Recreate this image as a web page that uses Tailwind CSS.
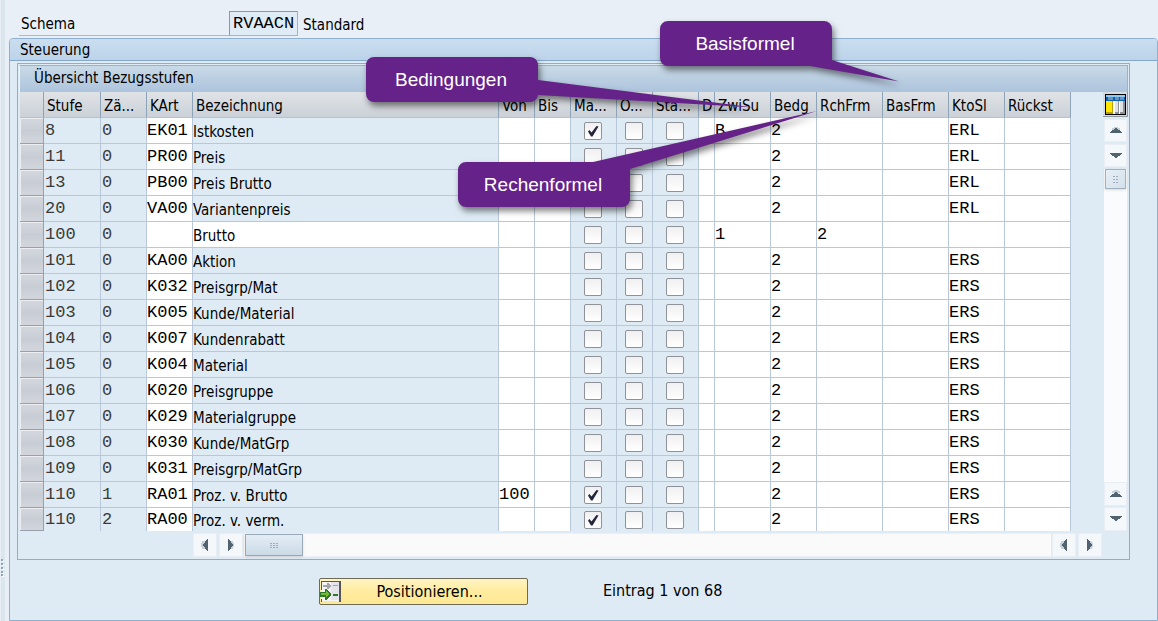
<!DOCTYPE html>
<html lang="de">
<head>
<meta charset="utf-8">
<title>Schema Steuerung</title>
<script src="https://cdn.jsdelivr.net/npm/@tailwindcss/browser@4"></script>
</head>
<body class="relative flex min-h-screen bg-[#e8eff7] font-['DejaVu_Sans_Condensed','DejaVu_Sans',sans-serif] text-[15px] leading-5 text-black">
<!-- splitter -->
<div class="ml-px flex w-1 shrink-0 items-end bg-[#dae6eb]">
  <svg class="mb-11" width="3" height="18" viewBox="0 0 3 18" shape-rendering="crispEdges"><path fill="#fff" d="M1 1h2v2H1zM1 5h2v2H1zM1 9h2v2H1zM1 13h2v2H1zM1 16h2v2H1z"/><path fill="#93a3b5" d="M0 0h2v2H0zM0 4h2v2H0zM0 8h2v2H0zM0 12h2v2H0zM0 15h2v2H0z"/></svg>
</div>

<main class="ml-1 min-w-0 flex-1">
  <!-- schema line -->
  <div class="flex h-[38px] items-start pt-[11px] pl-[10px]">
    <label for="schema" class="flex h-[25px] w-[210px] items-center border-b border-[#b4b8bb] pt-0.5 pl-0.5">Schema</label>
    <input id="schema" value="RVAACN" readonly class="h-[25px] w-[69px] border border-[#a9b3bc] border-t-[#8f989f] border-l-[#8f989f] bg-[#dfebf5] pl-[3px] font-['Liberation_Mono',monospace] text-[17px] leading-5 outline-none">
    <span class="flex h-[25px] items-center pt-0.5 pl-[5px]">Standard</span>
  </div>

  <!-- group box -->
  <section class="rounded-t-[4px] border border-[#8eb0d0] bg-[#deebf4]">
    <h2 class="flex h-[22px] items-center rounded-t-[3px] border-b border-[#85a7c9] bg-linear-to-b from-[#cbdef0] to-[#bcd3e9] pl-[10px]">Steuerung</h2>

    <div class="mt-0.5 mr-[27px] ml-[7px] border border-[#8fadcc] pb-0.5">
      <div class="mx-px mt-px flex h-[27px] items-center border-t border-r border-l border-[#9fb0c2] border-l-[#eef4f9] bg-linear-to-b from-[#c9dae7] to-[#adc4dd] pb-0.5 pl-[14px]">Übersicht Bezugsstufen</div>
      <div class="flex pl-0.5">
        <table class="flex-1 table-fixed border-separate border-spacing-0">
          <colgroup>
            <col class="w-6"><col class="w-[57px]"><col class="w-[46px]"><col class="w-[46px]"><col><col class="w-9"><col class="w-9"><col class="w-[46px]"><col class="w-9"><col class="w-[46px]"><col class="w-4"><col class="w-14"><col class="w-[46px]"><col class="w-[66px]"><col class="w-[66px]"><col class="w-14"><col class="w-[66px]">
          </colgroup>
          <thead><tr id="head"></tr></thead>
          <tbody id="rows"></tbody>
        </table>
        <!-- vertical scrollbar -->
        <div class="ml-8 flex w-[25px] shrink-0 flex-col items-center">
          <button aria-label="Tabelleneinstellungen" class="flex h-[25px] w-[25px] items-center justify-center border-r border-b border-[#8f989f] bg-[#d5dbe0]">
            <svg width="21" height="21" viewBox="0 0 21 21" shape-rendering="crispEdges"><path d="M0 0h21v21H0z"/><path fill="#8ccaf7" d="M1 1h19v2H1z"/><path fill="#0d62b0" d="M1 3h19v4H1z"/><path fill="#6f94bb" d="M3 3h5v3H3zM10 3h4v3h-4zM15 3h4v3h-4z"/><path fill="#fff" d="M1 7h19v13H1z"/><path fill="#ffe600" d="M1 7h6v11H1z"/><path fill="#b7a000" d="M1 18h6v2H1zM7 7h1v13H7z"/><path fill="#dfe3e6" d="M10 7h3v11h-3zM15 7h3v11h-3z"/><path fill="#8c9297" d="M10 18h4v2h-4zM15 18h4v2h-4zM13 7h1v11h-1zM18 7h2v13h-2z"/></svg>
          </button>
          <button aria-label="Zeile zurück" class="mt-0.5 grid h-[23px] w-[23px] shrink-0 place-items-center border border-[#e9eef5] bg-[#f4f8fb]"><svg width="12" height="8" viewBox="0 0 12 8" shape-rendering="crispEdges"><path fill="#c7d0d8" d="M4 0h4v1h2v2H2V1h2z"/><path fill="#50636f" d="M0 5h12v1H0zM1 4h10v1H1zM2 3h8v1H2zM4 2h4v1H4zM5 1h2v1H5z"/></svg></button>
          <button aria-label="Zeile vor" class="mt-0.5 grid h-[23px] w-[23px] shrink-0 place-items-center border border-[#e9eef5] bg-[#f4f8fb]"><svg width="12" height="8" viewBox="0 0 12 8" shape-rendering="crispEdges"><path fill="#50636f" d="M0 1h12v1H0zM1 2h10v1H1zM2 3h8v1H2zM4 4h4v1H4zM5 5h2v1H5z"/></svg></button>
          <div class="mt-0.5 flex w-[23px] flex-1 flex-col bg-[#fafbfc]">
            <div class="ml-px grid h-5 w-[21px] place-items-center border border-[#a3b1be] bg-linear-to-br from-[#e6eff6] to-[#d3e0eb] shadow-sm"><svg width="7" height="9" viewBox="0 0 7 9" shape-rendering="crispEdges"><path fill="#a0aebb" d="M1 1h2v1H1zM4 1h2v1H4zM1 4h2v1H1zM4 4h2v1H4zM1 7h2v1H1zM4 7h2v1H4z"/></svg></div>
          </div>
          <button aria-label="Seite zurück" class="grid h-6 w-[23px] shrink-0 place-items-center border border-[#e9eef5] bg-[#f4f8fb]"><svg width="12" height="8" viewBox="0 0 12 8" shape-rendering="crispEdges"><path fill="#c7d0d8" d="M4 0h4v1h2v2H2V1h2z"/><path fill="#50636f" d="M0 6h12v1H0zM1 5h10v1H1zM2 4h8v1H2zM4 3h4v1H4zM5 2h2v1H5z"/></svg></button>
          <button aria-label="Seite vor" class="mt-px grid h-6 w-[23px] shrink-0 place-items-center border border-[#e9eef5] bg-[#f4f8fb]"><svg width="12" height="8" viewBox="0 0 12 8" shape-rendering="crispEdges"><path fill="#50636f" d="M0 1h12v1H0zM1 2h10v1H1zM2 3h8v1H2zM4 4h4v1H4zM5 5h2v1H5z"/></svg></button>
        </div>
        <div class="w-px shrink-0"></div>
      </div>
      <!-- horizontal scrollbar -->
      <div class="mt-0.5 mr-[27px] ml-[175px] flex h-6 gap-px">
        <button aria-label="Spalte zurück" class="mr-px grid h-6 w-6 place-items-center border border-[#e9eef5] bg-[#f4f8fb]"><svg width="8" height="12" viewBox="0 0 8 12" shape-rendering="crispEdges"><path fill="#c7d0d8" d="M0 4h1V2h3v8H1V8H0z"/><path fill="#50636f" d="M6 0h1v12H6zM5 1h1v10H5zM4 2h1v8H4zM3 4h1v4H3zM2 5h1v2H2z"/></svg></button>
        <button aria-label="Spalte vor" class="grid h-6 w-6 place-items-center border border-[#e9eef5] bg-[#f4f8fb]"><svg width="8" height="12" viewBox="0 0 8 12" shape-rendering="crispEdges"><path fill="#c7d0d8" d="M3 2h3v2h1v4H6v2H3z"/><path fill="#50636f" d="M1 0h1v12H1zM2 1h1v10H2zM3 2h1v8H3zM4 4h1v4H4zM5 5h1v2H5z"/></svg></button>
        <div class="flex flex-1 border-y border-[#eceff3] bg-[#fafafa]">
          <div class="ml-px grid h-[22px] w-[58px] place-items-center border border-[#98a8b7] bg-linear-to-b from-[#e3edf5] to-[#cbdae7] shadow-sm"><svg width="9" height="7" viewBox="0 0 9 7" shape-rendering="crispEdges"><path fill="#a0aebb" d="M0 1h2v1H0zM3 1h2v1H3zM6 1h2v1H6zM0 3h2v1H0zM3 3h2v1H3zM6 3h2v1H6zM0 5h2v1H0zM3 5h2v1H3zM6 5h2v1H6z"/></svg></div>
        </div>
        <button aria-label="Seite links" class="mr-px grid h-6 w-6 place-items-center border border-[#e9eef5] bg-[#f4f8fb]"><svg width="8" height="12" viewBox="0 0 8 12" shape-rendering="crispEdges"><path fill="#c7d0d8" d="M0 4h1V2h3v8H1V8H0z"/><path fill="#50636f" d="M6 0h1v12H6zM5 1h1v10H5zM4 2h1v8H4zM3 4h1v4H3zM2 5h1v2H2z"/></svg></button>
        <button aria-label="Seite rechts" class="grid h-6 w-6 place-items-center border border-[#e9eef5] bg-[#f4f8fb]"><svg width="8" height="12" viewBox="0 0 8 12" shape-rendering="crispEdges"><path fill="#c7d0d8" d="M3 2h3v2h1v4H6v2H3z"/><path fill="#50636f" d="M1 0h1v12H1zM2 1h1v10H2zM3 2h1v8H3zM4 4h1v4H4zM5 5h1v2H5z"/></svg></button>
      </div>
    </div>

    <!-- footer -->
    <div class="flex h-[60px] items-center pt-0.5 pl-[309px] text-base leading-5">
      <button class="flex h-[27px] w-[209px] items-center rounded-[2px] border border-[#6d6a55] bg-linear-to-b from-[#fff4c4] via-[#ffec9e] to-[#fde893]">
        <svg width="22" height="22" viewBox="0 0 22 22" shape-rendering="crispEdges"><path fill="#f4f4f6" d="M2 1h18v20H2z"/><path fill="#e4e4ea" d="M11 2h8v18h-8z"/><path fill="#55555a" d="M1 1h1v9H1zM1 19h1v3H1zM19 1h2v21h-2zM1 1h20v1H1z"/><path fill="#a3a3a8" d="M3 5h4V3h2v1h1v1h1v2h-1v1H9v1H7V7H3zM13 5h5v1h-5z"/><path fill="#2c7a2c" d="M0 12h5V9h2v1h1v1h1v1h1v1h1v3h-1v1H9v1H8v1H7v1H5v-3H0zM13 14h5v2h-5z"/><path fill="#7ab833" d="M1 13h5v-2h1v1h1v1h1v2H8v1H7v1H6v-2H1z"/></svg>
        <span class="flex-1 pt-px pr-4 pl-1.5">Positionieren...</span>
      </button>
      <span class="ml-[75px]">Eintrag 1 von 68</span>
    </div>
  </section>
</main>

<!-- callouts pointing at the table's columns -->
<svg class="pointer-events-none absolute top-0 left-0 drop-shadow-[2px_4px_3px_rgb(0_0_0/0.5)]" width="920" height="215" viewBox="0 0 920 215" aria-hidden="true">
  <g fill="#652289">
    <path d="M374 57H530a8 8 0 0 1 8 8V80L754 107.500L538 95a8 8 0 0 1-8 7H374a8 8 0 0 1-8-8V65a8 8 0 0 1 8-8z"/>
    <path d="M668 21H824a8 8 0 0 1 8 8V60L899 81.500L810 66H668a8 8 0 0 1-8-8V29a8 8 0 0 1 8-8z"/>
    <path d="M466 162H593L817 111L630 169V199a8 8 0 0 1-8 8H466a8 8 0 0 1-8-8V170a8 8 0 0 1 8-8z"/>
  </g>
</svg>
<div class="absolute top-[57px] left-[365px] grid h-[45px] w-[172px] place-items-center font-['Liberation_Sans',sans-serif] text-[19px] text-white">Bedingungen</div>
<div class="absolute top-[21px] left-[659px] grid h-[45px] w-[172px] place-items-center font-['Liberation_Sans',sans-serif] text-[19px] text-white">Basisformel</div>
<div class="absolute top-[162px] left-[457px] grid h-[45px] w-[172px] place-items-center font-['Liberation_Sans',sans-serif] text-[19px] text-white">Rechenformel</div>

<script>
const heads = ['', 'Stufe', 'Zä...', 'KArt', 'Bezeichnung', 'Von', 'Bis', 'Ma...', 'O...', 'Sta...', 'D', 'ZwiSu', 'Bedg', 'RchFrm', 'BasFrm', 'KtoSl', 'Rückst'];
document.getElementById('head').innerHTML = heads.map(h =>
  `<th class="h-[26px] overflow-hidden border-r border-b border-r-[#8fa3b8] border-b-[#b4c3d3] bg-linear-to-b from-[#e0e3e6] to-[#cbd1d8] p-0 pt-0.5 pl-[3px] text-left font-normal whitespace-nowrap">${h}</th>`).join('');

// Stufe, Zähler, KArt, Bezeichnung, Von, manuell, ZwiSu, Bedg, RchFrm, KtoSl
const data = [
  ['8','0','EK01','Istkosten','',1,'B','2','','ERL'],
  ['11','0','PR00','Preis','',0,'','2','','ERL'],
  ['13','0','PB00','Preis Brutto','',0,'','2','','ERL'],
  ['20','0','VA00','Variantenpreis','',0,'','2','','ERL'],
  ['100','0','','Brutto','',0,'1','','2',''],
  ['101','0','KA00','Aktion','',0,'','2','','ERS'],
  ['102','0','K032','Preisgrp/Mat','',0,'','2','','ERS'],
  ['103','0','K005','Kunde/Material','',0,'','2','','ERS'],
  ['104','0','K007','Kundenrabatt','',0,'','2','','ERS'],
  ['105','0','K004','Material','',0,'','2','','ERS'],
  ['106','0','K020','Preisgruppe','',0,'','2','','ERS'],
  ['107','0','K029','Materialgruppe','',0,'','2','','ERS'],
  ['108','0','K030','Kunde/MatGrp','',0,'','2','','ERS'],
  ['109','0','K031','Preisgrp/MatGrp','',0,'','2','','ERS'],
  ['110','1','RA01','Proz. v. Brutto','100',1,'','2','','ERS'],
  ['110','2','RA00','Proz. v. verm.','',1,'','2','','ERS'],
];
document.getElementById('rows').innerHTML = data.map((r, i) => {
  const last = i === data.length - 1;
  const edge = last ? 'h-[23px] border-r border-[#b9c8d8] p-0' : 'h-[26px] border-r border-b border-[#b9c8d8] p-0';
  const inH = last ? 'h-[23px]' : 'h-[25px]';
  const lead = last ? 'leading-[23px]' : 'leading-[25px]';
  const key = v => `<td class="${edge} ${lead} pl-px align-top font-['Liberation_Mono',monospace] text-[17px] text-[#3a3a3a]">${v}</td>`;
  const box = (v, name) => `<td class="${edge} bg-white align-top"><input aria-label="${name} ${r[0]}" value="${v}" class="${inH} block w-full bg-transparent font-['Liberation_Mono',monospace] text-[17px] leading-5 outline-none"></td>`;
  const tick = (v, name) => `<td class="${edge}"><label class="mr-px grid place-items-center"><input type="checkbox" aria-label="${name} ${r[0]}" ${v ? 'checked' : ''} class="peer col-start-1 row-start-1 h-[18px] w-[18px] appearance-none rounded-[2px] border border-[#8f9296] bg-linear-to-b from-[#f0f0f2] to-white"><svg class="pointer-events-none invisible col-start-1 row-start-1 peer-checked:visible" width="12" height="12" viewBox="0 0 12 12"><path d="M1 6.500L2.500 5L4.500 7.500L9.500 1L11.500 1.500L5.500 11.500H4z" fill="#25253a"/></svg></label></td>`;
  const name = i === 4
    ? `<td class="${edge} bg-white pt-0.5"><input aria-label="Bezeichnung ${r[0]}" value="${r[3]}" class="block h-5 w-full bg-transparent outline-none"></td>`
    : `<td class="${edge} pt-0.5">${r[3]}</td>`;
  return `<tr>
    <td class="${last ? 'h-[23px]' : 'h-[26px]'} border-r border-b border-[#97a1ad] p-0"><button aria-label="Zeile ${r[0]} markieren" class="block ${last ? 'h-[22px]' : 'h-[25px]'} w-full border-t border-l border-[#eceef1] bg-linear-to-b from-[#d3d7dd] via-[#c8cdd5] to-[#d2d6dc]"></button></td>
    ${key(r[0])}${key(r[1])}${box(r[2], 'KArt')}${name}
    ${box(r[4], 'Von')}${box('', 'Bis')}
    ${tick(r[5], 'Manuell')}${tick(0, 'Obligatorisch')}${tick(0, 'Statistisch')}
    ${box('', 'Druck')}${box(r[6], 'ZwiSu')}${box(r[7], 'Bedg')}${box(r[8], 'RchFrm')}${box('', 'BasFrm')}${box(r[9], 'KtoSl')}${box('', 'Rückst')}
  </tr>`;
}).join('');
</script>
</body>
</html>
